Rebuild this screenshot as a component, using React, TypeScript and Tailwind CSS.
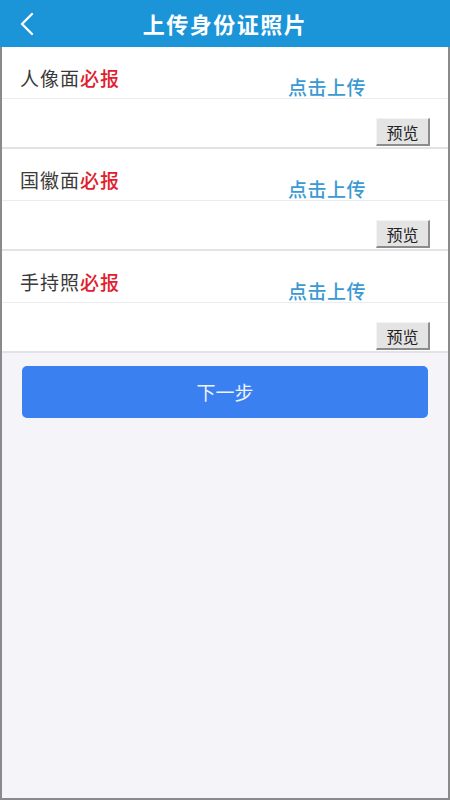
import React from 'react';

const sections = ['人像面', '国徽面', '手持照'];

function UploadSection({ label }: { label: string }) {
  return (
    <div className="bg-white border-b-2 border-[#e3e3e6]">
      {/* 上传行 */}
      <div className="flex items-start h-[52px] border-b border-[#ececee] pl-[18px]">
        <div className="w-[268px] pt-[19px] text-[19px] leading-[24px] tracking-[1px] text-[#3a3a3a]">
          {label}
          <span className="text-[#e0202e] font-medium">必报</span>
        </div>
        <div className="pt-[28px] text-[19px] leading-[24px] tracking-[0.5px] font-medium text-[#3a9ad4]">点击上传</div>
      </div>
      {/* 预览行 */}
      <div className="flex justify-end h-[48px] pr-[18px]">
        <button className="mt-[19px] h-[28px] w-[54px] bg-[#e4e4e4] border-t border-l border-[#f4f4f4] border-r-2 border-b-2 border-r-[#8c8c8c] border-b-[#8c8c8c] text-[16px] leading-none text-[#222]">
          预览
        </button>
      </div>
    </div>
  );
}

export default function App() {
  return (
    <div
      className="w-[450px] h-[800px] flex flex-col bg-[#f5f4f8]"
      style={{ fontFamily: '"Noto Sans CJK SC", "Noto Sans", sans-serif' }}
    >
      {/* 顶部标题栏 */}
      <div className="relative h-[47px] shrink-0 bg-[#1b95d8] flex items-center justify-center">
        <svg className="absolute left-[17px] top-[12px]" width="20" height="24" viewBox="0 0 20 24" fill="none">
          <path d="M15 2 L5 12 L15 22" stroke="white" strokeWidth="2.4" strokeLinecap="round" strokeLinejoin="round" />
        </svg>
        <h1 className="text-white text-[22px] font-bold tracking-[1.5px]">上传身份证照片</h1>
      </div>

      <div className="flex-1 flex flex-col border-x-2 border-b-2 border-[#8a8a8a]">
        {sections.map((s) => (
          <UploadSection key={s} label={s} />
        ))}

        <div className="px-[20px] pt-[13px]">
          <button className="w-full h-[52px] rounded-[5px] bg-[#3a80f0] text-[#eef3ff] text-[19px]">下一步</button>
        </div>
      </div>
    </div>
  );
}
